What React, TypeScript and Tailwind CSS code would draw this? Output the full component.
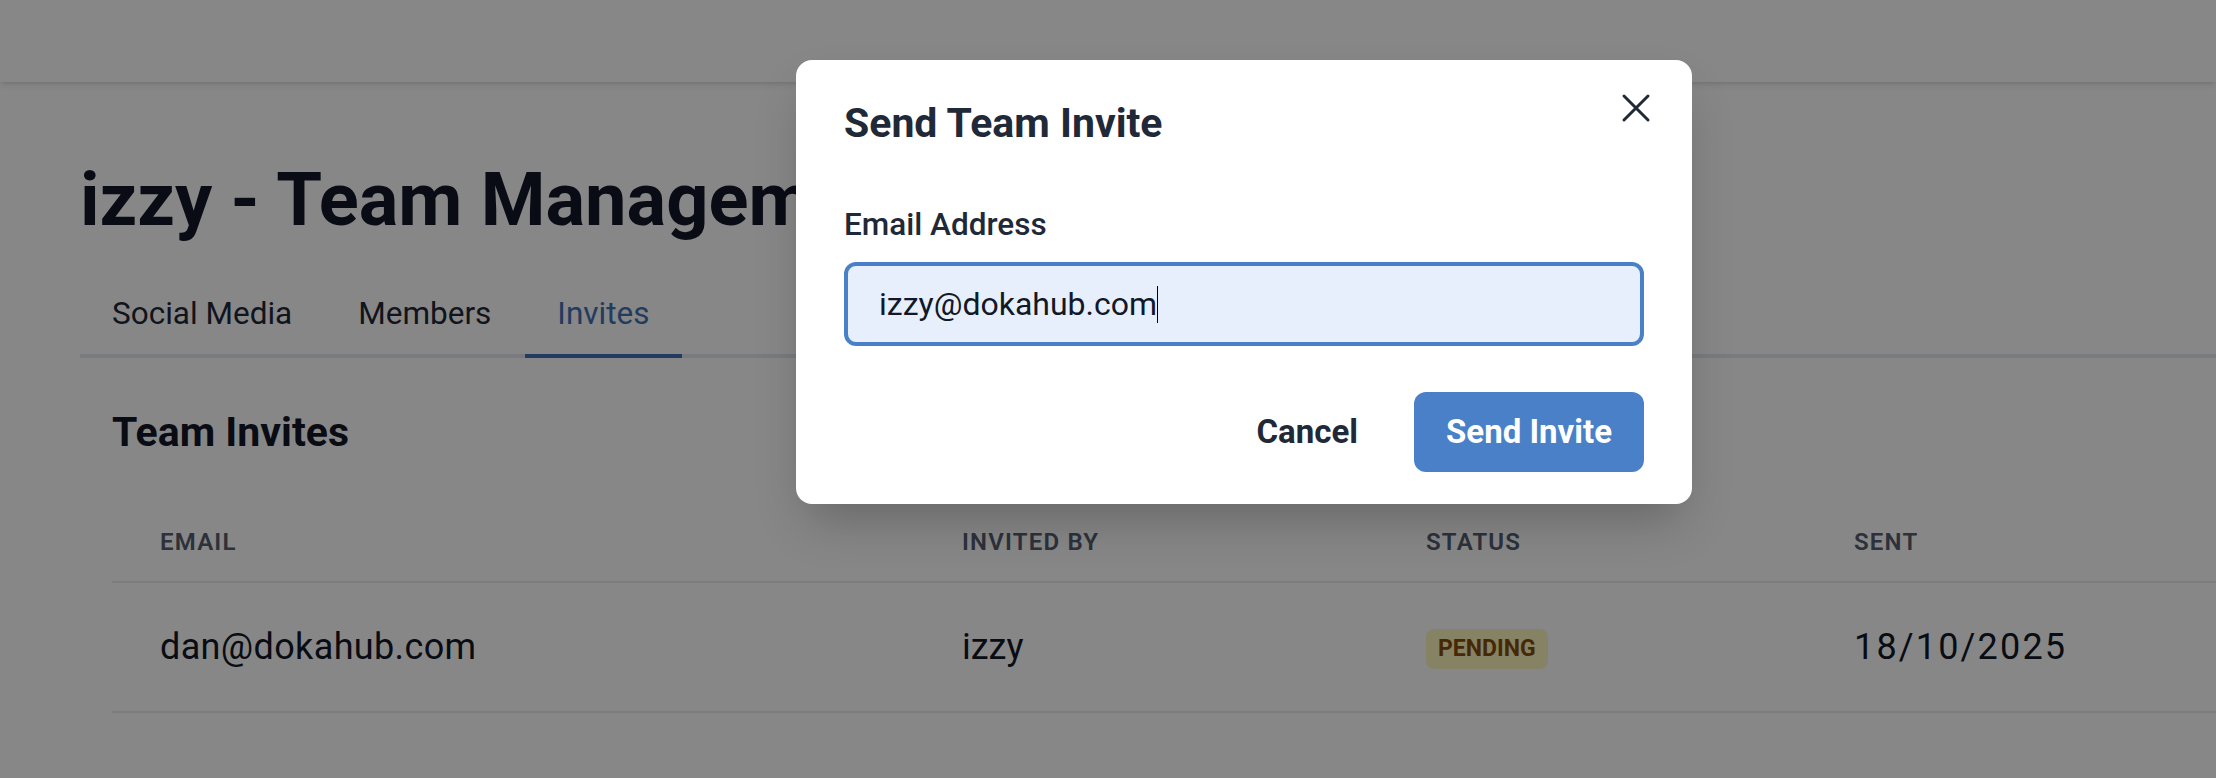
import React from 'react'

const invites = [
  { email: 'dan@dokahub.com', invitedBy: 'izzy', status: 'PENDING', sent: '18/10/2025' },
]

function CloseIcon() {
  return (
    <svg viewBox="0 0 24 24" className="h-12 w-12" fill="none" stroke="currentColor" strokeWidth={1.5} strokeLinecap="round">
      <path d="M6 6l12 12M18 6 6 18" />
    </svg>
  )
}

export default function App() {
  return (
    <div className="relative h-[778px] w-full overflow-hidden bg-white font-['Roboto',sans-serif] text-[#111827]">
      {/* top bar */}
      <header className="relative z-10 h-[82px] bg-white shadow-md" />

      <main className="pl-[80px] pt-[81px]">
        <h1 className="text-[74px] leading-[74px] font-bold whitespace-nowrap">izzy - Team Management</h1>

        {/* tabs */}
        <nav className="mt-[36px] flex gap-[2px] border-b-4 border-[#e2e8f0]">
          <div className="-mb-[4px] border-b-4 border-transparent px-8 pt-[19px] pb-[18px] text-[31.5px] leading-[44px] text-[#1f2937]">Social Media</div>
          <div className="-mb-[4px] border-b-4 border-transparent px-8 pt-[19px] pb-[18px] text-[31.5px] leading-[44px] text-[#1f2937]">Members</div>
          <div className="-mb-[4px] border-b-4 border-[#4270b4] px-8 pt-[19px] pb-[18px] text-[31.5px] leading-[44px] text-[#4270b4]">Invites</div>
        </nav>

        <section className="pl-8">
          <h2 className="mt-[46px] text-[41px] leading-[56px] font-bold">Team Invites</h2>

          <div className="mt-[43px]">
            <div className="grid grid-cols-[802px_464px_428px_1fr] border-b-2 border-[#ebebeb] py-[23px] text-[24px] leading-[32px] font-semibold tracking-wider text-[#535d70]">
              <div className="px-12">EMAIL</div>
              <div className="px-12">INVITED BY</div>
              <div className="px-12">STATUS</div>
              <div className="px-12">SENT</div>
            </div>
            {invites.map((inv) => (
              <div key={inv.email} className="grid h-[130px] grid-cols-[802px_464px_428px_1fr] items-center border-b-2 border-[#ebebeb] text-[36px] leading-[56px]">
                <div className="px-12 tracking-[0.01em]">{inv.email}</div>
                <div className="px-12">{inv.invitedBy}</div>
                <div className="flex px-12 pt-[3px]">
                  <span className="rounded-lg bg-[#fbf8bd] px-3 text-[23px] leading-[40px] font-bold text-[#854d0e]">{inv.status}</span>
                </div>
                <div className="px-12 tracking-[0.06em]">{inv.sent}</div>
              </div>
            ))}
          </div>
        </section>
      </main>

      {/* backdrop */}
      <div className="absolute inset-0 z-20 bg-black/[0.47]" />

      {/* dialog */}
      <div className="absolute left-[796px] top-[60px] z-30 w-[896px] rounded-2xl bg-white px-12 pt-[35px] pb-8 shadow-2xl">
        <button className="absolute right-8 top-6 text-[#1f2937]">
          <CloseIcon />
        </button>
        <h3 className="text-[41px] leading-[56px] font-bold text-[#1f2937]">Send Team Invite</h3>

        <label className="mt-[54px] mb-[17px] block text-[31.5px] leading-[40px] font-medium text-[#1f2937]">Email Address</label>
        <div className="flex h-[84px] items-center rounded-xl border-4 border-[#4a80c8] bg-[#e8effc] pl-[31px] text-[32px] text-[#111827]">
          <span>izzy@dokahub.com</span>
          <span className="h-[37px] w-px bg-black" />
        </div>

        <div className="mt-[46px] flex justify-end gap-6">
          <button className="h-20 px-8 text-[33px] font-bold text-[#1f2937]">Cancel</button>
          <button className="h-20 rounded-xl bg-[#4a80c8] px-8 text-[33px] font-bold text-white">Send Invite</button>
        </div>
      </div>
    </div>
  )
}
